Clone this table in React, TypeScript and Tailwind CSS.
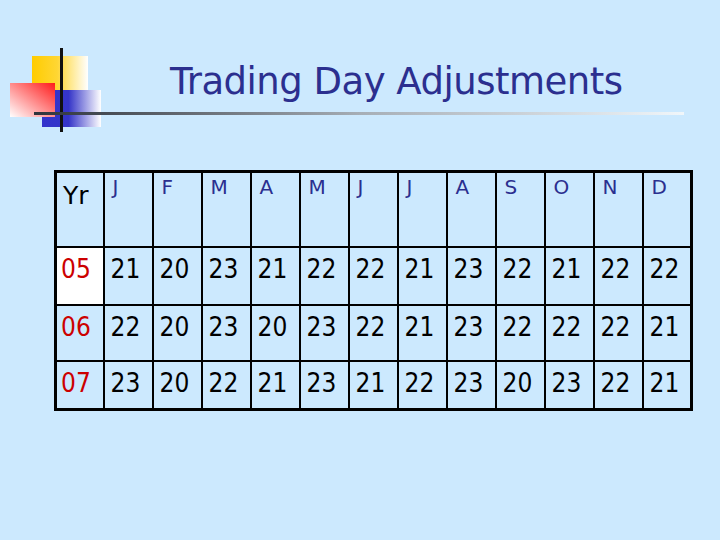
const months = ['J', 'F', 'M', 'A', 'M', 'J', 'J', 'A', 'S', 'O', 'N', 'D'];

const rows: { yr: string; days: number[] }[] = [
  { yr: '05', days: [21, 20, 23, 21, 22, 22, 21, 23, 22, 21, 22, 22] },
  { yr: '06', days: [22, 20, 23, 20, 23, 22, 21, 23, 22, 22, 22, 21] },
  { yr: '07', days: [23, 20, 22, 21, 23, 21, 22, 23, 20, 23, 22, 21] },
];

const rowHeights = ['h-[58px]', 'h-[56px]', 'h-[49px]'];

const Logo = () => (
  <svg width="110" height="140" viewBox="0 0 110 140" className="absolute left-0 top-0">
    <defs>
      <linearGradient id="yel" x1="0" x2="1" y1="0" y2="0">
        <stop offset="0" stopColor="#ffcc00" />
        <stop offset="0.45" stopColor="#ffd633" />
        <stop offset="1" stopColor="#ffffff" />
      </linearGradient>
      <linearGradient id="blu" x1="0" x2="1" y1="0" y2="0">
        <stop offset="0" stopColor="#3333cc" />
        <stop offset="0.45" stopColor="#3535c8" />
        <stop offset="1" stopColor="#ffffff" />
      </linearGradient>
      <linearGradient id="red" x1="1" x2="0" y1="0" y2="1">
        <stop offset="0" stopColor="#ff1a1a" />
        <stop offset="1" stopColor="#ffffff" />
      </linearGradient>
    </defs>
    <rect x="32" y="56" width="56" height="36" fill="url(#yel)" />
    <rect x="42" y="90" width="59" height="37" fill="url(#blu)" />
    <rect x="10" y="83" width="45" height="34" fill="url(#red)" />
    <rect x="60" y="48" width="3" height="84" fill="#111" />
  </svg>
);

export default function App() {
  return (
    <div
      className="relative w-[720px] h-[540px] bg-[#cce9fe] overflow-hidden"
      style={{ fontFamily: 'Tahoma, "DejaVu Sans", Verdana, sans-serif' }}
    >
      <Logo />
      <div className="relative pt-[58px] pl-[170px]">
        <h1 className="text-[37px] leading-[48px] text-[#2b2f8f] tracking-[-0.5px]">Trading Day Adjustments</h1>
      </div>
      <div className="relative ml-[34px] mt-[6px] w-[650px] h-[3px] bg-gradient-to-r from-[#2f343c] via-[#a6aeb6] to-[#f0f6fa]" />
      <div className="pl-[54px] pt-[55px]">
        <table className="border-collapse border-[3px] border-black">
          <tbody>
            <tr className="h-[75px]">
              <td className="w-[48px] border-2 border-black align-top pl-[6px] pt-[10px] leading-none text-black text-[25px]">
                Yr
              </td>
              {months.map((m, i) => (
                <td
                  key={i}
                  className="w-[49px] border-2 border-black align-top pl-[8px] pt-[4px] leading-none text-[#2b2f8f] text-[20px]"
                >
                  {m}
                </td>
              ))}
            </tr>
            {rows.map((r, ri) => (
              <tr
                key={r.yr}
                className={`${rowHeights[ri]} leading-none text-[26px]`}
                style={{ fontFamily: '"DejaVu Sans Condensed", Tahoma, sans-serif' }}
              >
                <td
                  className={`border-2 border-black align-top pl-[4px] pt-[8px] text-[#cc0000] ${
                    ri === 0 ? 'bg-white' : ''
                  }`}
                >
                  {r.yr}
                </td>
                {r.days.map((d, i) => (
                  <td key={i} className="border-2 border-black align-top pl-[6px] pt-[8px] text-black">
                    {d}
                  </td>
                ))}
              </tr>
            ))}
          </tbody>
        </table>
      </div>
    </div>
  );
}
